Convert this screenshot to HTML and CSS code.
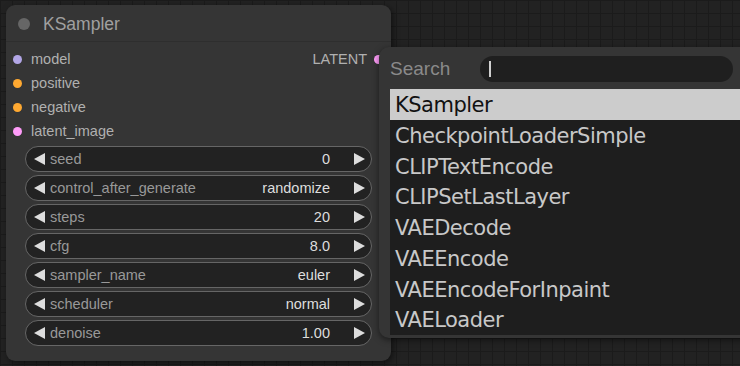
FILE: index.html
```html
<!DOCTYPE html>
<html lang="en">

<head>
    <meta charset="UTF-8">
    <meta name="viewport" content="width=device-width, initial-scale=1.0">
    <title>KSampler - node search</title>
    <link rel="stylesheet" href="styles.css">
</head>

<body>
    <!-- canvas with one node and the search dialog on top -->
    <div class="canvas">
        <div class="node">
            <div class="node-title">
                <span class="title-dot"></span>
                <span class="title-text">KSampler</span>
            </div>
            <div class="node-body">
                <div class="slots">
                    <div class="slot-row">
                        <span class="slot"><span class="dot dot-model"></span>model</span>
                        <span class="slot slot-out">LATENT<span class="dot dot-latent"></span></span>
                    </div>
                    <div class="slot-row">
                        <span class="slot"><span class="dot dot-cond"></span>positive</span>
                    </div>
                    <div class="slot-row">
                        <span class="slot"><span class="dot dot-cond"></span>negative</span>
                    </div>
                    <div class="slot-row">
                        <span class="slot"><span class="dot dot-latent"></span>latent_image</span>
                    </div>
                </div>

                <div class="widgets">
                    <div class="widget">
                        <svg class="arrow" width="12" height="12" viewBox="0 0 12 12"><polygon points="11,0 11,12 0,6" /></svg>
                        <span class="w-label">seed</span>
                        <span class="w-value">0</span>
                        <svg class="arrow" width="12" height="12" viewBox="0 0 12 12"><polygon points="1,0 1,12 12,6" /></svg>
                    </div>
                    <div class="widget">
                        <svg class="arrow" width="12" height="12" viewBox="0 0 12 12"><polygon points="11,0 11,12 0,6" /></svg>
                        <span class="w-label">control_after_generate</span>
                        <span class="w-value">randomize</span>
                        <svg class="arrow" width="12" height="12" viewBox="0 0 12 12"><polygon points="1,0 1,12 12,6" /></svg>
                    </div>
                    <div class="widget">
                        <svg class="arrow" width="12" height="12" viewBox="0 0 12 12"><polygon points="11,0 11,12 0,6" /></svg>
                        <span class="w-label">steps</span>
                        <span class="w-value">20</span>
                        <svg class="arrow" width="12" height="12" viewBox="0 0 12 12"><polygon points="1,0 1,12 12,6" /></svg>
                    </div>
                    <div class="widget">
                        <svg class="arrow" width="12" height="12" viewBox="0 0 12 12"><polygon points="11,0 11,12 0,6" /></svg>
                        <span class="w-label">cfg</span>
                        <span class="w-value">8.0</span>
                        <svg class="arrow" width="12" height="12" viewBox="0 0 12 12"><polygon points="1,0 1,12 12,6" /></svg>
                    </div>
                    <div class="widget">
                        <svg class="arrow" width="12" height="12" viewBox="0 0 12 12"><polygon points="11,0 11,12 0,6" /></svg>
                        <span class="w-label">sampler_name</span>
                        <span class="w-value">euler</span>
                        <svg class="arrow" width="12" height="12" viewBox="0 0 12 12"><polygon points="1,0 1,12 12,6" /></svg>
                    </div>
                    <div class="widget">
                        <svg class="arrow" width="12" height="12" viewBox="0 0 12 12"><polygon points="11,0 11,12 0,6" /></svg>
                        <span class="w-label">scheduler</span>
                        <span class="w-value">normal</span>
                        <svg class="arrow" width="12" height="12" viewBox="0 0 12 12"><polygon points="1,0 1,12 12,6" /></svg>
                    </div>
                    <div class="widget">
                        <svg class="arrow" width="12" height="12" viewBox="0 0 12 12"><polygon points="11,0 11,12 0,6" /></svg>
                        <span class="w-label">denoise</span>
                        <span class="w-value">1.00</span>
                        <svg class="arrow" width="12" height="12" viewBox="0 0 12 12"><polygon points="1,0 1,12 12,6" /></svg>
                    </div>
                </div>
            </div>
        </div>

        <!-- dialogo de busca -->
        <div class="search-dialog">
            <div class="search-head">
                <span class="search-label">Search</span>
                <div class="search-input"><span class="caret"></span></div>
            </div>
            <ul class="search-list">
                <li class="selected">KSampler</li>
                <li>CheckpointLoaderSimple</li>
                <li>CLIPTextEncode</li>
                <li>CLIPSetLastLayer</li>
                <li>VAEDecode</li>
                <li>VAEEncode</li>
                <li>VAEEncodeForInpaint</li>
                <li>VAELoader</li>
            </ul>
        </div>
    </div>
</body>

</html>
```

FILE: styles.css
```css
/* canvas do editor de nodes */
body {
    margin: 0;
    background: #202020;
    overflow: hidden;
    font-family: 'Liberation Sans', Arial, sans-serif;
}

.canvas {
    position: relative;
    width: 740px;
    height: 366px;
    background-color: #222222;
    background-image:
        linear-gradient(to right, #1b1b1b 1px, transparent 1px),
        linear-gradient(to bottom, #1b1b1b 1px, transparent 1px);
    background-size: 12px 13px;
    overflow: hidden;
}

/* node KSampler */
.node {
    position: absolute;
    left: 6px;
    top: 5px;
    width: 385px;
    height: 356px;
    background: #353535;
    border-radius: 9px;
    box-shadow: 2px 2px 6px rgba(0, 0, 0, 0.5);
    display: flex;
    flex-direction: column;
}

.node-title {
    height: 37px;
    box-sizing: border-box;
    padding-top: 2px;
    border-bottom: 1px solid #2e2e2e;
    display: flex;
    align-items: center;
    padding-left: 12px;
    gap: 13px;
}

.title-dot {
    width: 12px;
    height: 12px;
    border-radius: 50%;
    background: #666666;
}

.title-text {
    color: #a0a0a0;
    font-size: 17.5px;
}

.node-body {
    padding: 5px 0 0 0;
}

.slot-row {
    height: 24px;
    display: flex;
    align-items: center;
    justify-content: space-between;
}

.slot {
    display: flex;
    align-items: center;
    color: #b0b0b0;
    font-size: 14.5px;
    padding-left: 7px;
}

.slot .dot {
    margin-right: 9px;
}

.slot-out {
    padding-left: 0;
    padding-right: 8px;
}

.slot-out .dot {
    margin-right: 0;
    margin-left: 7px;
}

.dot {
    width: 9px;
    height: 9px;
    border-radius: 50%;
}

.dot-model {
    background: #b2a6e6;
}

.dot-cond {
    background: #ffa931;
}

.dot-latent {
    background: #ff9cf9;
}

/* widgets */
.widgets {
    margin-top: 3px;
    padding: 0 19px;
    display: flex;
    flex-direction: column;
    gap: 3px;
}

.widget {
    height: 24px;
    border: 1px solid #666666;
    border-radius: 13px;
    background: #222222;
    display: flex;
    align-items: center;
    padding: 0 6px 0 8px;
    font-size: 14.5px;
}

.arrow {
    fill: #dddddd;
    flex: none;
}

.w-label {
    color: #999999;
    margin-left: 4px;
    flex: 1;
}

.w-value {
    color: #dddddd;
    margin-right: 23px;
}

/* dialogo de busca */
.search-dialog {
    position: absolute;
    left: 379px;
    top: 47px;
    width: 400px;
    height: 291px;
    background: #353535;
    border-radius: 10px 0 0 10px;
    box-shadow: 0 2px 6px rgba(0, 0, 0, 0.5);
    display: flex;
    flex-direction: column;
}

.search-head {
    height: 42px;
    box-sizing: border-box;
    padding-top: 2px;
    display: flex;
    align-items: center;
    padding-left: 11px;
}

.search-label {
    width: 90px;
    color: #8a8a8a;
    font-size: 19px;
}

.search-input {
    width: 253px;
    height: 26px;
    border-radius: 13px;
    background: #1f1f1f;
    display: flex;
    align-items: center;
    padding-left: 9px;
    box-sizing: border-box;
}

.caret {
    width: 2px;
    height: 16px;
    background: #d0d0d0;
}

.search-list {
    list-style: none;
    margin: 0 0 0 11px;
    padding: 0;
    background: #1e1e1e;
    height: 246px;
}

.search-list li {
    height: 30.75px;
    line-height: 32px;
    padding-left: 5px;
    font-family: 'DejaVu Sans', Verdana, sans-serif;
    font-size: 21px;
    letter-spacing: -0.5px;
    color: #c8c8c8;
    overflow: hidden;
}

.search-list li.selected {
    background: #cccccc;
    color: #111111;
}
```
